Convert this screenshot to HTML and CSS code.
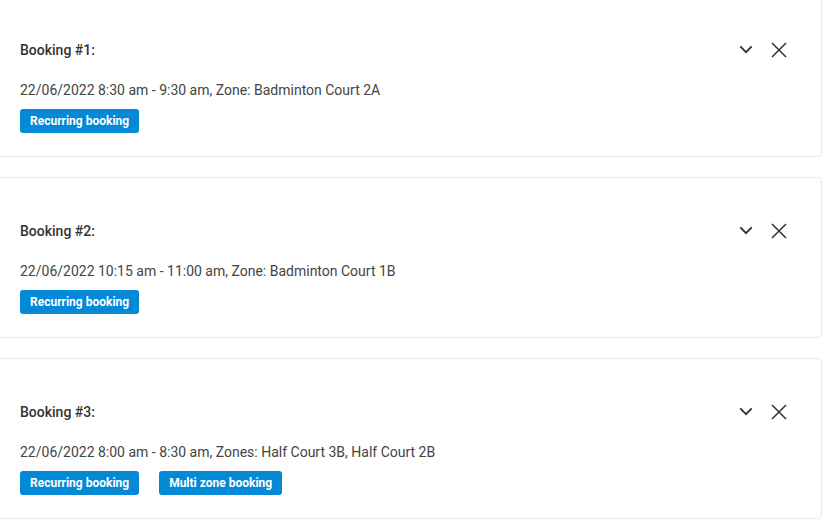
FILE: index.html
```html
<!DOCTYPE html>
<html>
<head>
<meta charset="utf-8">
<link rel="stylesheet" href="styles.css">
</head>
<body>
<div class="list">
  <div class="card">
    <div class="card-head">
      <div class="title">Booking #1:</div>
      <div class="actions">
        <svg class="icon chevron" viewBox="0 0 24 24"><path d="M6.3 8.4L12 14.1 17.7 8.4"/></svg>
        <svg class="icon close" viewBox="0 0 24 24"><path d="M5 5L19 19M19 5L5 19"/></svg>
      </div>
    </div>
    <div class="desc">22/06/2022 8:30 am - 9:30 am, Zone: Badminton Court 2A</div>
    <div class="tags"><span class="tag">Recurring booking</span></div>
  </div>
  <div class="card">
    <div class="card-head">
      <div class="title">Booking #2:</div>
      <div class="actions">
        <svg class="icon chevron" viewBox="0 0 24 24"><path d="M6.3 8.4L12 14.1 17.7 8.4"/></svg>
        <svg class="icon close" viewBox="0 0 24 24"><path d="M5 5L19 19M19 5L5 19"/></svg>
      </div>
    </div>
    <div class="desc">22/06/2022 10:15 am - 11:00 am, Zone: Badminton Court 1B</div>
    <div class="tags"><span class="tag">Recurring booking</span></div>
  </div>
  <div class="card">
    <div class="card-head">
      <div class="title">Booking #3:</div>
      <div class="actions">
        <svg class="icon chevron" viewBox="0 0 24 24"><path d="M6.3 8.4L12 14.1 17.7 8.4"/></svg>
        <svg class="icon close" viewBox="0 0 24 24"><path d="M5 5L19 19M19 5L5 19"/></svg>
      </div>
    </div>
    <div class="desc">22/06/2022 8:00 am - 8:30 am, Zones: Half Court 3B, Half Court 2B</div>
    <div class="tags"><span class="tag">Recurring booking</span><span class="tag">Multi zone booking</span></div>
  </div>
</div>
</body>
</html>
```

FILE: styles.css
```css
* { box-sizing: border-box; }
html, body {
  margin: 0;
  padding: 0;
  background: #ffffff;
  font-family: Roboto, "Liberation Sans", sans-serif;
  overflow: hidden;
}
.list {
  display: flex;
  flex-direction: column;
  gap: 20px;
  margin: -4px 12px 0 -4px;
}
.card {
  height: 161px;
  border: 1px solid #e8e8e8;
  border-radius: 4px;
  background: #fff;
  padding: 35px 30px 23px 23px;
  display: flex;
  flex-direction: column;
}
.card-head {
  height: 36px;
  display: flex;
  align-items: center;
  justify-content: space-between;
}
.title {
  font-size: 14px;
  font-weight: 500;
  color: #333333;
}
.actions {
  display: flex;
  align-items: center;
  gap: 9px;
}
.icon {
  width: 24px;
  height: 24px;
  fill: none;
  stroke: #333333;
}
.chevron { stroke-width: 1.9; }
.close { stroke-width: 1.5; }
.desc {
  margin-top: 12px;
  font-size: 14px;
  line-height: 20px;
  color: #444444;
}
.tags {
  margin-top: 9px;
  display: flex;
  gap: 20px;
}
.tag {
  height: 24px;
  line-height: 24px;
  padding: 0 10px;
  border-radius: 3px;
  background: #0389d6;
  color: #ffffff;
  font-size: 12px;
  font-weight: 700;
}
```
